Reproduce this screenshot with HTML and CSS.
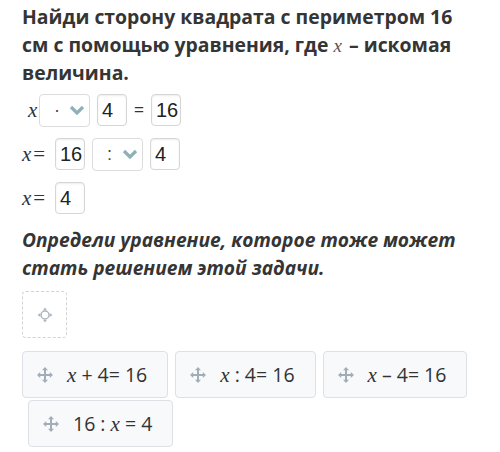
FILE: index.html
```html
<!DOCTYPE html>
<html lang="ru">
<head>
  <meta charset="UTF-8">
  <title>Уравнение</title>
  <link rel="stylesheet" href="styles.css">
</head>
<body>
  <div class="task">
    <h2 class="title">Найди сторону квадрата с периметром 16 см с помощью уравнения, где <i class="var">x</i> – искомая величина.</h2>

    <div class="row">
      <i class="var lead">x</i>
      <div class="select"><span class="select-val">·</span><svg class="chev" width="16" height="10" viewBox="0 0 16 10"><path d="M2 2l6 6 6-6" fill="none" stroke="#8fb0b6" stroke-width="3.2"/></svg></div>
      <div class="box">4</div>
      <span class="eq-sans">=</span>
      <div class="box">16</div>
    </div>

    <div class="row">
      <span class="math"><i class="var">x</i><span class="eq">=</span></span>
      <div class="box">16</div>
      <div class="select"><span class="select-val">:</span><svg class="chev" width="16" height="10" viewBox="0 0 16 10"><path d="M2 2l6 6 6-6" fill="none" stroke="#8fb0b6" stroke-width="3.2"/></svg></div>
      <div class="box">4</div>
    </div>

    <div class="row">
      <span class="math"><i class="var">x</i><span class="eq">=</span></span>
      <div class="box">4</div>
    </div>

    <h3 class="question">Определи уравнение, которое тоже может стать решением этой задачи.</h3>

    <div class="drop">
      <svg width="16" height="16" viewBox="0 0 16 16">
        <circle cx="8" cy="8" r="4" fill="none" stroke="#aeb6be" stroke-width="1.5"/>
        <path d="M8 0.5l2 2.8h-4zM8 15.5l2-2.8h-4zM0.5 8l2.8-2v4zM15.5 8l-2.8-2v4z" fill="#aeb6be"/>
      </svg>
    </div>

    <div class="cards">
      <div class="card"><svg class="move" width="16" height="16" viewBox="0 0 16 16"><path d="M8 2v12M2 8h12" stroke="#a3adb8" stroke-width="2"/><path d="M8 0l3 3.2h-6zM8 16l3-3.2h-6zM0 8l3.2-3v6zM16 8l-3.2-3v6z" fill="#a3adb8"/></svg><span class="expr"><i class="var">x</i> + 4= 16</span></div>
      <div class="card"><svg class="move" width="16" height="16" viewBox="0 0 16 16"><path d="M8 2v12M2 8h12" stroke="#a3adb8" stroke-width="2"/><path d="M8 0l3 3.2h-6zM8 16l3-3.2h-6zM0 8l3.2-3v6zM16 8l-3.2-3v6z" fill="#a3adb8"/></svg><span class="expr"><i class="var">x</i> : 4= 16</span></div>
      <div class="card"><svg class="move" width="16" height="16" viewBox="0 0 16 16"><path d="M8 2v12M2 8h12" stroke="#a3adb8" stroke-width="2"/><path d="M8 0l3 3.2h-6zM8 16l3-3.2h-6zM0 8l3.2-3v6zM16 8l-3.2-3v6z" fill="#a3adb8"/></svg><span class="expr"><i class="var">x</i> – 4= 16</span></div>
      <div class="card card-shift"><svg class="move" width="16" height="16" viewBox="0 0 16 16"><path d="M8 2v12M2 8h12" stroke="#a3adb8" stroke-width="2"/><path d="M8 0l3 3.2h-6zM8 16l3-3.2h-6zM0 8l3.2-3v6zM16 8l-3.2-3v6z" fill="#a3adb8"/></svg><span class="expr">16 : <i class="var">x</i> = 4</span></div>
    </div>
  </div>
</body>
</html>
```

FILE: styles.css
```css
body {
  margin: 0;
  background-color: #fff;
  font-family: "Open Sans", sans-serif;
  color: #353535;
}

.task {
  padding: 3px 0 0 22px;
}

.title {
  margin: 0;
  font-size: 19.4px;
  font-weight: 700;
  line-height: 28px;
  width: 440px;
}

.var {
  font-family: "Liberation Serif", serif;
  font-style: italic;
  font-weight: 400;
  font-size: 21px;
}

.title .var {
  display: inline-block;
  font-size: 19px;
  line-height: 1;
  margin-right: 2px;
  color: #555;
}

.row {
  display: flex;
  align-items: center;
  gap: 7px;
  height: 32px;
  margin-top: 7px;
}

.row + .row {
  margin-top: 12px;
}

.lead {
  width: 10px;
  margin: 0 -6px 0 6px;
  color: #333;
}

.math {
  font-family: "Liberation Serif", serif;
  font-size: 21px;
  width: 26px;
  color: #333;
  white-space: nowrap;
}

.eq {
  margin-left: 2px;
}

.box {
  box-sizing: border-box;
  width: 30px;
  height: 32px;
  border: 1px solid #d6d6d6;
  border-radius: 4px;
  box-shadow: inset 0 1px 2px rgba(0, 0, 0, 0.08);
  padding: 0 0 0 4px;
  font-family: "Liberation Sans", sans-serif;
  font-size: 20px;
  line-height: 30px;
  color: #222;
}

.select {
  box-sizing: border-box;
  width: 51px;
  height: 33px;
  border: 1px solid #dcdcdc;
  border-radius: 4px;
  display: flex;
  align-items: center;
  padding: 0 4px 0 14px;
  justify-content: space-between;
  font-family: "Liberation Sans", sans-serif;
  font-size: 18px;
  color: #444;
}

.eq-sans {
  width: 10px;
  text-align: center;
  font-family: "Liberation Sans", sans-serif;
  font-size: 17px;
  color: #333;
}

.question {
  margin: 12px 0 0 0;
  font-size: 19.2px;
  font-weight: 700;
  font-style: italic;
  line-height: 28px;
  width: 450px;
}

.drop {
  box-sizing: border-box;
  width: 45px;
  height: 47px;
  margin-top: 9px;
  border: 1px dashed #d2d2d2;
  border-radius: 4px;
  display: flex;
  align-items: center;
  justify-content: center;
}

.cards {
  display: flex;
  flex-wrap: wrap;
  gap: 2px 7px;
  margin-top: 13px;
  width: 450px;
}

.card {
  box-sizing: border-box;
  height: 47px;
  padding: 0 20px 0 14px;
  border: 1px solid #dde1e5;
  border-radius: 4px;
  background-color: #f7f9fb;
  display: flex;
  align-items: center;
  gap: 14px;
  font-size: 19.5px;
  color: #333;
  white-space: nowrap;
}

.card-shift {
  margin-left: 6px;
}

.expr .var {
  font-size: 21px;
}
```
